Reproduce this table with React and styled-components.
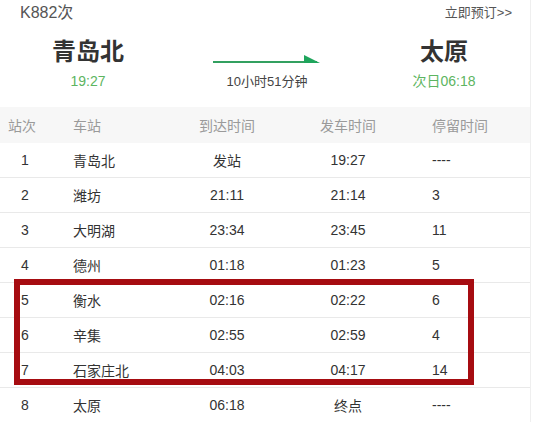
import React from 'react';
import styled, { createGlobalStyle } from 'styled-components';

const Global = createGlobalStyle`
    body {
        margin: 0;
        background: #fff;
        font-family: "Liberation Sans", "Noto Sans CJK SC", sans-serif;
    }
`

const Page = styled.div`
    width: 530px;
    height: 422px;
    overflow: hidden;
    border-right: 1px solid #efefef;
`

const TopBar = styled.div`
    display: flex;
    justify-content: space-between;
    align-items: center;
    height: 22px;
    padding: 0 18px 0 20px;
    color: #555;
`

const TrainNo = styled.span`
    font-size: 16px;
`

const Book = styled.span`
    font-size: 13px;
    color: #555;
`

const Route = styled.div`
    display: grid;
    grid-template-columns: 176px 182px 1fr;
    height: 85px;
    padding-top: 16px;
    box-sizing: border-box;
`

const Stop = styled.div`
    display: flex;
    flex-direction: column;
    align-items: center;
`

const StationName = styled.div`
    font-size: 24px;
    line-height: 28px;
    font-weight: 700;
    color: #333;
`

const Time = styled.div`
    margin-top: 6px;
    font-size: 14px;
    line-height: 18px;
    color: #5db561;
`

const Duration = styled.div`
    display: flex;
    flex-direction: column;
    align-items: center;
    padding-top: 16px;
`

const DurationText = styled.div`
    margin-top: 10px;
    font-size: 13px;
    line-height: 16px;
    color: #444;
`

const Row = styled.div`
    display: grid;
    grid-template-columns: 50px 117px 120px 122px 1fr;
    align-items: center;
    height: ${p => (p.head ? '36px' : '35px')};
    background: ${p => (p.head ? '#f7f7f7' : '#fff')};
    border-bottom: ${p => (p.head ? 'none' : '1px solid #e9e9e9')};
    box-sizing: border-box;
    font-size: 14px;
    color: ${p => (p.head ? '#9a9a9a' : '#333')};
`

const Cell = styled.div`
    text-align: ${p => p.align || 'left'};
    padding-left: ${p => p.pad || 0}px;
    white-space: nowrap;
`

const Marked = styled.div`
    position: relative;
`

const MarkBox = styled.div`
    position: absolute;
    left: 14px;
    top: -4px;
    width: 460px;
    bottom: 3px;
    border: 6px solid #a60c11;
    box-sizing: border-box;
    pointer-events: none;
`

const stops = [
    ['1', '青岛北', '发站', '19:27', '----'],
    ['2', '潍坊', '21:11', '21:14', '3'],
    ['3', '大明湖', '23:34', '23:45', '11'],
    ['4', '德州', '01:18', '01:23', '5'],
    ['5', '衡水', '02:16', '02:22', '6'],
    ['6', '辛集', '02:55', '02:59', '4'],
    ['7', '石家庄北', '04:03', '04:17', '14'],
    ['8', '太原', '06:18', '终点', '----'],
]

const StopRow = ({ data, head }) => (
    <Row head={head}>
        <Cell align={head ? 'left' : 'center'} pad={head ? 8 : 0}>{data[0]}</Cell>
        <Cell pad={23}>{data[1]}</Cell>
        <Cell align="center">{data[2]}</Cell>
        <Cell align="center">{data[3]}</Cell>
        <Cell pad={23}>{data[4]}</Cell>
    </Row>
)

const Arrow = () => (
    <svg width="108" height="10" viewBox="0 0 108 10">
        <line x1="0" y1="8" x2="104" y2="8" stroke="#32a060" strokeWidth="2" />
        <polygon points="91,1 107,9 91,9" fill="#1fa55c" />
    </svg>
)

export default function App() {
    return (
        <>
            <Global />
            <Page>
                <TopBar>
                    <TrainNo>K882次</TrainNo>
                    <Book>立即预订&gt;&gt;</Book>
                </TopBar>
                <Route>
                    <Stop>
                        <StationName>青岛北</StationName>
                        <Time>19:27</Time>
                    </Stop>
                    <Duration>
                        <Arrow />
                        <DurationText>10小时51分钟</DurationText>
                    </Duration>
                    <Stop>
                        <StationName>太原</StationName>
                        <Time>次日06:18</Time>
                    </Stop>
                </Route>
                <StopRow head data={['站次', '车站', '到达时间', '发车时间', '停留时间']} />
                {stops.slice(0, 4).map(s => <StopRow key={s[0]} data={s} />)}
                <Marked>
                    {stops.slice(4, 7).map(s => <StopRow key={s[0]} data={s} />)}
                    <MarkBox />
                </Marked>
                <StopRow data={stops[7]} />
            </Page>
        </>
    )
}
